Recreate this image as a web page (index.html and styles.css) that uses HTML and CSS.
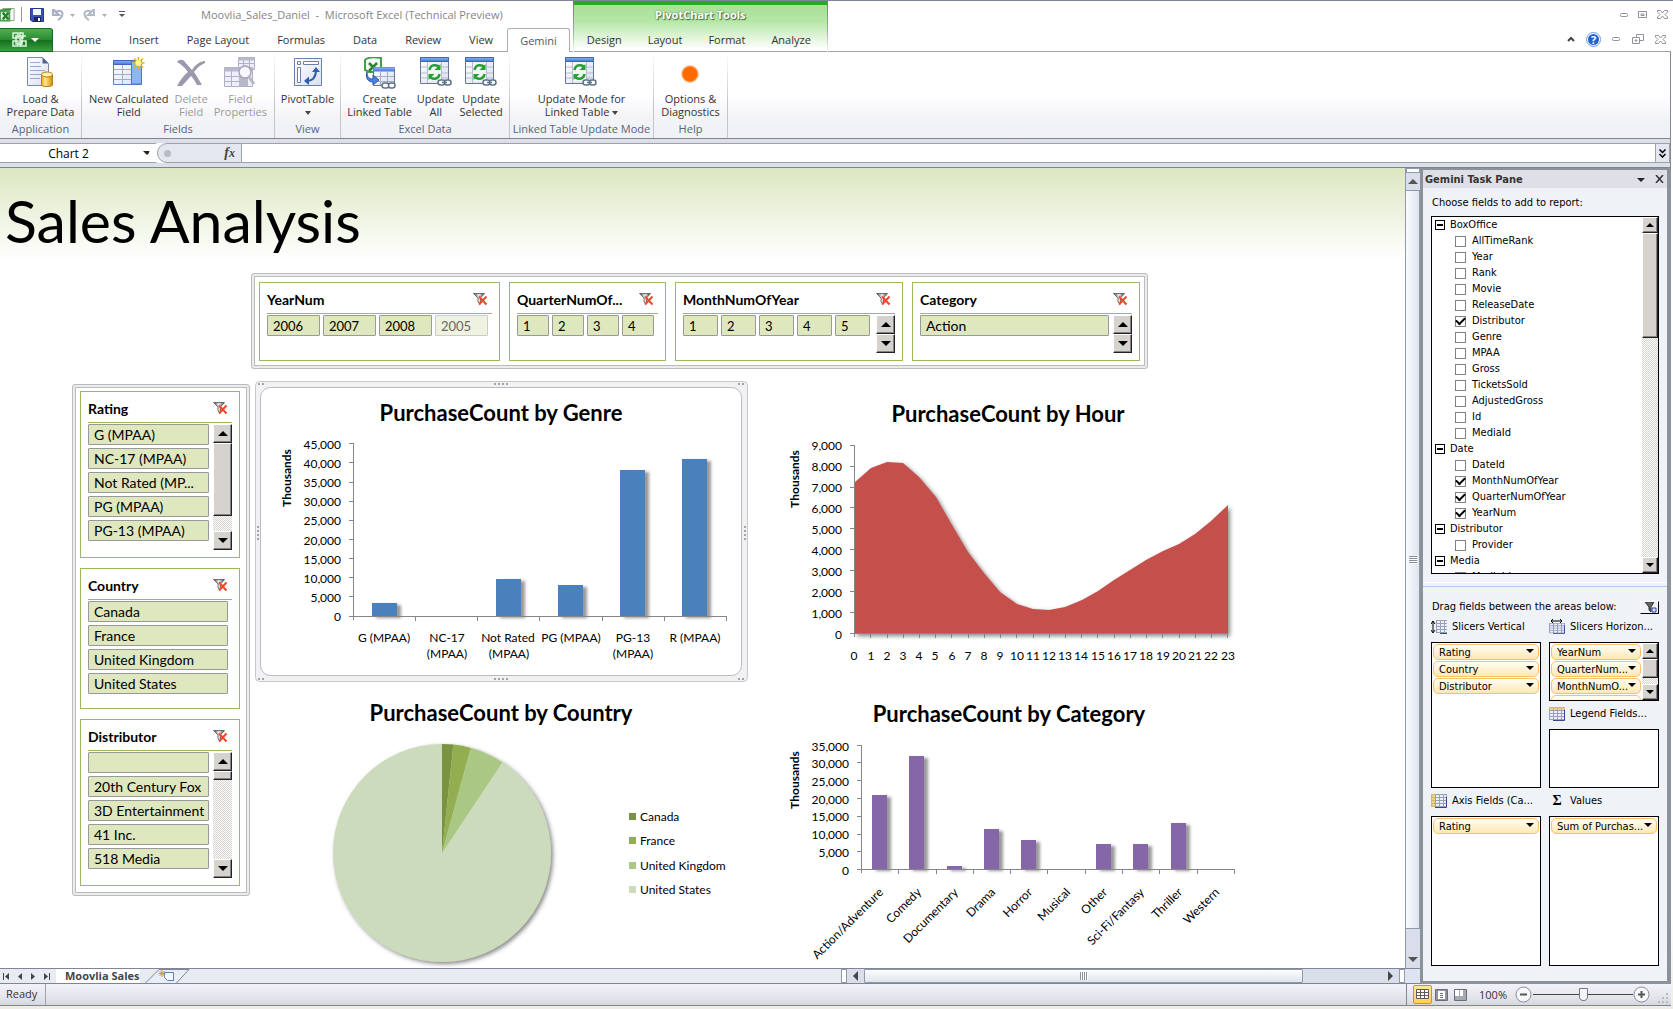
FILE: index.html
```html
<!DOCTYPE html>
<html lang="en">
<head>
<meta charset="utf-8">
<title>Moovlia_Sales_Daniel - Microsoft Excel (Technical Preview)</title>
<link rel="stylesheet" href="styles.css">
</head>
<body>
<svg class="defs" aria-hidden="true">
  <defs>
    <linearGradient id="sheetFill" x1="0" y1="0" x2="1" y2="1"><stop offset="0" stop-color="#fff"/><stop offset="1" stop-color="#d9dff2"/></linearGradient>
    <linearGradient id="blueFill" x1="0" y1="0" x2="0" y2="1"><stop offset="0" stop-color="#8db4f5"/><stop offset="1" stop-color="#3f76d8"/></linearGradient>
    <linearGradient id="goldFill" x1="0" y1="0" x2="1" y2="0"><stop offset="0" stop-color="#e9a81c"/><stop offset=".35" stop-color="#ffe98a"/><stop offset="1" stop-color="#d48a06"/></linearGradient>
    <linearGradient id="funnelFill" x1="0" y1="0" x2="1" y2="0"><stop offset="0" stop-color="#444"/><stop offset=".5" stop-color="#eee"/><stop offset="1" stop-color="#333"/></linearGradient>
    <radialGradient id="orb" cx=".5" cy=".5" r=".5"><stop offset=".75" stop-color="#ff6a00"/><stop offset="1" stop-color="#ff6a00" stop-opacity=".2"/></radialGradient>
    <filter id="shadow" x="-20%" y="-20%" width="150%" height="150%"><feDropShadow dx="4" dy="2" stdDeviation="1.5" flood-color="#555" flood-opacity=".6"/></filter>
    <filter id="softShadow" x="-10%" y="-10%" width="120%" height="120%"><feDropShadow dx="2" dy="2" stdDeviation="2" flood-color="#555" flood-opacity=".7"/></filter>
    <symbol id="clear-filter" viewBox="0 0 15 13">
      <path d="M.5 .5h11L7.500 5v6L5 9V5z" fill="url(#funnelFill)" stroke="#555" stroke-width=".8"/>
      <path d="M6 3.500l7.500 8M13.500 3.500l-7.500 8" stroke="#f4462a" stroke-width="2" fill="none"/>
    </symbol>
    <symbol id="excel" viewBox="0 0 16 16">
      <path d="M3 1h12v13H4z" fill="#fff" stroke="#8a9a8a"/>
      <path d="M0 2l12-1v2l-11 1zM0 2h2v12h-2z" fill="#2f8f37"/>
      <path d="M0 4h10v10H0z" fill="#e7f3e6" stroke="#48a04d" stroke-width="2"/>
      <path d="M3 5.500l6 7M9 5.500l-6 7" stroke="#1f7f2a" stroke-width="2.500"/>
    </symbol>
    <symbol id="linked-refresh" viewBox="0 0 32 30">
      <path d="M.5 .5h28v26h-28z" fill="url(#sheetFill)" stroke="#68768f"/>
      <path d="M.5 .5h28v4h-28z" fill="url(#blueFill)" stroke="#3f68b8"/>
      <path d="M1 10h27M1 16h27M1 21h27M7.500 5v21M21.500 5v21" stroke="#b4bccd" fill="none"/>
      <path d="M8 7h13v17H8z" fill="#f2f6f5"/>
      <path d="M9.500 13c1-6 8-6 10-2" stroke="#26a034" stroke-width="2.500" fill="none"/>
      <path d="M20.500 7v6h-6z" fill="#26a034"/>
      <path d="M19.500 17c-1 6-8 6-10 2" stroke="#26a034" stroke-width="2.500" fill="none"/>
      <path d="M8.500 23v-6h6z" fill="#26a034"/>
      <rect x="18" y="23" width="7" height="5" rx="2.500" fill="#fff" stroke="#5e7389" stroke-width="1.500"/>
      <rect x="24.500" y="23" width="6.500" height="5" rx="2.500" fill="#fff" stroke="#5e7389" stroke-width="1.500"/>
      <path d="M22 25.500h5" stroke="#5e7389" stroke-width="1.500"/>
    </symbol>
    <symbol id="grid" viewBox="0 0 16 14">
      <path d="M0 0h16v13H0z" fill="#98a0b8"/>
      <path d="M1 4h3v2H1zM5 4h3v2H5zM9 4h3v2H9zM13 4h2v2h-2zM1 7h3v2H1zM5 7h3v2H5zM9 7h3v2H9zM13 7h2v2h-2zM1 10h3v2H1zM5 10h3v2H5zM9 10h3v2H9zM13 10h2v2h-2zM1 1h3v2H1zM5 1h3v2H5zM9 1h3v2H9zM13 1h2v2h-2z" fill="#eef"/>
      <path d="M15.500 3v10.500H4" stroke="#3b478c" fill="none"/>
    </symbol>
    <symbol id="close-x" viewBox="0 0 11 9">
      <path d="M.5 .5h3l2 2.500 2-2.500h3v1.500L8 4.500 10.500 7v1.500h-3L5.500 6l-2 2.500h-3V7L3 4.500.5 2z" fill="#fff" stroke="#909399"/>
    </symbol>
  </defs>
</svg>

<div class="app">
  <header class="chrome">
    <div class="chrome-main">
      <div class="titlebar">
        <svg class="ic-app" viewBox="0 0 16 16"><use href="#excel"/></svg>
        <span class="vsep"></span>
        <button class="qa" aria-label="Save"><svg width="14" height="14" viewBox="0 0 14 14"><path d="M.5 .5h13v13H2l-1.500-1.500z" fill="#3a50b4" stroke="#27378c"/><path d="M3 1h8v6H3z" fill="#f4f6ff"/><path d="M4 9h7v5H4z" fill="#1c2555"/><path d="M8 10h2v3H8z" fill="#fff"/></svg></button>
        <button class="qa" aria-label="Undo"><svg width="23" height="12" viewBox="0 0 23 12"><path d="M1 0v6h6zM3 4c4-4 9-2 7 3-1 2-2 3-4 4" fill="none" stroke="#aab0c4" stroke-width="2"/><path d="M18 5h5l-2.500 3z" fill="#a9adb5"/></svg></button>
        <button class="qa" aria-label="Redo"><svg width="24" height="12" viewBox="0 0 24 12"><path d="M11 0v6H5zM9 4C5 0 0 2 2 7c1 2 2 3 4 4" fill="none" stroke="#b4b9c8" stroke-width="2"/><path d="M19 5h5l-2.500 3z" fill="#a9adb5"/></svg></button>
        <button class="qa last" aria-label="Customize Quick Access Toolbar"><svg width="6" height="7" viewBox="0 0 6 7"><path d="M0 .5h6" stroke="#555"/><path d="M0 3h6L3 6z" fill="#555"/></svg></button>
        <h1 class="doc-title">Moovlia_Sales_Daniel &nbsp;- &nbsp;Microsoft Excel (Technical Preview)</h1>
      </div>
      <nav class="tabs">
        <button class="file-tab" aria-label="File"><svg width="28" height="16" viewBox="0 0 28 16"><path d="M1 1h5v5H1zM8.500 1H11v5H8.500M1 9h5v5H1zM4 4h6v8H4zM9 9h5v5H9zM11 4h3M8 0v15" fill="none" stroke="#d9f7d9" stroke-width="1.500"/><path d="M19 6h8l-4 4z" fill="#fff"/></svg></button>
        <button class="tab">Home</button><button class="tab">Insert</button><button class="tab">Page Layout</button><button class="tab">Formulas</button><button class="tab">Data</button><button class="tab">Review</button><button class="tab">View</button><button class="tab active">Gemini</button>
      </nav>
    </div>
    <div class="context">
      <p class="context-title">PivotChart Tools</p>
      <nav class="context-tabs"><button class="tab">Design</button><button class="tab">Layout</button><button class="tab">Format</button><button class="tab">Analyze</button></nav>
    </div>
    <div class="window-controls">
      <div class="wc-row">
        <button aria-label="Minimize"><svg width="9" height="4" viewBox="0 0 9 4"><rect x=".5" y=".5" width="7" height="3" rx="1" fill="#fff" stroke="#909399"/></svg></button>
        <button aria-label="Maximize"><svg width="10" height="8" viewBox="0 0 10 8"><path d="M.5 .5h8v6h-8zM3 3h3v1.500H3z" fill="#fff" stroke="#909399"/></svg></button>
        <button aria-label="Close"><svg width="11" height="9"><use href="#close-x"/></svg></button>
      </div>
      <div class="wc-row low">
        <button aria-label="Minimize the Ribbon"><svg width="8" height="6" viewBox="0 0 8 6"><path d="M1 5l3-3 3 3" fill="none" stroke="#444" stroke-width="2"/></svg></button>
        <button aria-label="Help"><svg width="15" height="15" viewBox="0 0 15 15"><circle cx="7.500" cy="7.500" r="7" fill="#fff" stroke="#6f9be6"/><circle cx="7.500" cy="7.500" r="5.500" fill="#2460d4"/><text x="7.500" y="11.500" text-anchor="middle" class="help-q">?</text></svg></button>
        <button aria-label="Minimize Window"><svg width="9" height="4" viewBox="0 0 9 4"><rect x=".5" y=".5" width="7" height="3" rx="1" fill="#fff" stroke="#909399"/></svg></button>
        <button aria-label="Restore Window"><svg width="12" height="10" viewBox="0 0 12 10"><path d="M4.500 .5h7v6h-7z" fill="#fff" stroke="#909399"/><path d="M.5 3.500h7v6h-7zM3 6h2v1H3z" fill="#fff" stroke="#909399"/></svg></button>
        <button aria-label="Close Window"><svg width="11" height="9"><use href="#close-x"/></svg></button>
      </div>
    </div>
  </header>

  <section class="ribbon">
    <div class="group g-app">
      <div class="cmds">
        <button class="cmd"><svg width="28" height="31" viewBox="0 0 28 31"><path d="M1.500 .5h15l6 6v22h-21z" fill="url(#sheetFill)" stroke="#7e8aa6"/><path d="M16.500 .5v6h6z" fill="#4d6494"/><path d="M4 5.500h10M4 9.500h11M4 13.500h15M4 17.500h11M4 21.500h10" stroke="#9aa8cc"/><path d="M15.500 18v10c0 2 11 2 11 0V18z" fill="url(#goldFill)" stroke="#b97e12"/><ellipse cx="21" cy="17.500" rx="5.500" ry="2.500" fill="#fff0b0" stroke="#b97e12"/></svg><span>Load &amp;<br>Prepare Data</span></button>
      </div>
      <p class="group-label">Application</p>
    </div>
    <div class="group g-fields">
      <div class="cmds">
        <button class="cmd"><svg width="32" height="31" viewBox="0 0 32 31"><path d="M.5 3.500h28v24h-28z" fill="url(#sheetFill)" stroke="#5b7fc0"/><path d="M.5 3.500h28v4h-28z" fill="url(#blueFill)" stroke="#3f68b8"/><path d="M18.500 4h10v23h-10z" fill="#8fb5f6" stroke="#4b79c9"/><path d="M1 12.500h17M1 17.500h17M1 22.500h17M9.500 8v19" stroke="#a5adc0"/><path d="M25.500 0v12M19.500 6h12M21 1.500l9 9M30 1.500l-9 9" stroke="#e8b40c" stroke-width="1.500"/><circle cx="25.500" cy="6" r="3" fill="#fff6a0"/></svg><span>New Calculated<br>Field</span></button>
        <button class="cmd off"><svg width="30" height="31" viewBox="0 0 30 31"><path d="M1 5c2-3 6-3 8 0l7 8C19 8 24 4 29 4v2c-5 2-8 5-11 9 3 4 5 8 8 13h-5c-2-4-4-7-6-9-3 3-6 7-9 10H1c3-6 7-11 11-14C8 10 5 7 1 5z" fill="#9b99ae"/></svg><span>Delete<br>Field</span></button>
        <button class="cmd off"><svg width="32" height="31" viewBox="0 0 32 31"><path d="M14.500 .5h16v12h-16zM.5 10.500h28v19h-28z" fill="#eef" stroke="#b0b0c2"/><path d="M14.500 .5h16v3h-16zM.5 10.500h28v4h-28zM15 15h9v14h-9z" fill="#b9b8ca"/><path d="M1 19.500h14M1 24.500h14M7.500 14v15M19.500 3v7M25.500 3v7M15 6.500h15" stroke="#b0b0c2"/><circle cx="21" cy="15" r="6" fill="#f6f6fc" stroke="#a5a4b8" stroke-width="1.500"/><path d="M25 20l5 7" stroke="#b6b5c6" stroke-width="3"/></svg><span>Field<br>Properties</span></button>
      </div>
      <p class="group-label">Fields</p>
    </div>
    <div class="group g-view">
      <div class="cmds">
        <button class="cmd"><svg width="28" height="31" viewBox="0 0 28 31"><path d="M.5 1.500h27v27H.5z" fill="url(#sheetFill)" stroke="#6b80a8"/><path d="M3.500 4.500h3v3h-3zM9.500 4.500h15v3h-15zM3.500 10.500h3v15h-3z" fill="#fff" stroke="#6b80a8"/><path d="M12 24c6 0 10-3 10-11" fill="none" stroke="#2f5fae" stroke-width="2"/><path d="M18 15l4-5 4 5zM15 19.500l-5 4.500 5 4z" fill="#2f5fae"/></svg><span>PivotTable<br><i class="drop"></i></span></button>
      </div>
      <p class="group-label">View</p>
    </div>
    <div class="group g-data">
      <div class="cmds">
        <button class="cmd"><svg width="32" height="32" viewBox="0 0 32 32"><path d="M1 3c3-3 10-3 16-2v14H5l-4-2z" fill="#f4faf3" stroke="#3f9f46" stroke-width="2"/><path d="M5 6l8 8M13 6l-8 8" stroke="#27842f" stroke-width="2.500"/><path d="M9.500 10.500h21v18h-21z" fill="url(#sheetFill)" stroke="#68768f"/><path d="M9.500 10.500h21v4h-21z" fill="url(#blueFill)"/><path d="M10 19.500h20M10 24.500h20M16.500 15v13M23.500 15v13" stroke="#a5adc0"/><path d="M3 15c0 5 2 7 6 7v-4l6 5-6 5v-3c-5 0-8-4-6-10z" fill="#4c82e0" stroke="#2857ac"/><rect x="18" y="26" width="7" height="5" rx="2.500" fill="#fff" stroke="#5e7389" stroke-width="1.500"/><rect x="24.500" y="26" width="6.500" height="5" rx="2.500" fill="#fff" stroke="#5e7389" stroke-width="1.500"/></svg><span>Create<br>Linked Table</span></button>
        <button class="cmd"><svg width="32" height="30"><use href="#linked-refresh"/></svg><span>Update<br>All</span></button>
        <button class="cmd"><svg width="32" height="30"><use href="#linked-refresh"/></svg><span>Update<br>Selected</span></button>
      </div>
      <p class="group-label">Excel Data</p>
    </div>
    <div class="group g-mode">
      <div class="cmds">
        <button class="cmd"><svg width="32" height="30"><use href="#linked-refresh"/></svg><span>Update Mode for<br>Linked Table <i class="drop"></i></span></button>
      </div>
      <p class="group-label">Linked Table Update Mode</p>
    </div>
    <div class="group g-help">
      <div class="cmds">
        <button class="cmd"><svg width="20" height="31" viewBox="0 0 20 31"><circle cx="10" cy="17" r="9" fill="url(#orb)"/></svg><span>Options &amp;<br>Diagnostics</span></button>
      </div>
      <p class="group-label">Help</p>
    </div>
  </section>

  <section class="formula-bar">
    <label class="name-box"><input class="name-input" type="text" value="Chart 2" aria-label="Name Box"><i class="drop big"></i></label>
    <div class="fx-cap"><span class="fx-dot"></span><button class="fx" aria-label="Insert Function">f<small>x</small></button></div>
    <input class="formula-input" type="text" aria-label="Formula">
    <button class="fx-expand" aria-label="Expand Formula Bar"><svg width="7" height="9" viewBox="0 0 7 9"><path d="M.5 .5l3 3 3-3M.5 5l3 3 3-3" fill="none" stroke="#000" stroke-width="1.500"/></svg></button>
  </section>

  <div class="workspace">
    <div class="book">
      <div class="sheet-row">
        <main class="sheet">
          <h2 class="sheet-title">Sales Analysis</h2>
          <section class="slicers horizontal">
            <div class="slicer s-year">
              <header><h3>YearNum</h3><button aria-label="Clear Filter"><svg width="15" height="13"><use href="#clear-filter"/></svg></button></header>
              <div class="slicer-body"><div class="opts row"><button>2006</button><button>2007</button><button>2008</button><button class="dim">2005</button></div></div>
            </div>
            <div class="slicer s-quarter">
              <header><h3>QuarterNumOf...</h3><button aria-label="Clear Filter"><svg width="15" height="13"><use href="#clear-filter"/></svg></button></header>
              <div class="slicer-body"><div class="opts row"><button>1</button><button>2</button><button>3</button><button>4</button></div></div>
            </div>
            <div class="slicer s-month">
              <header><h3>MonthNumOfYear</h3><button aria-label="Clear Filter"><svg width="15" height="13"><use href="#clear-filter"/></svg></button></header>
              <div class="slicer-body"><div class="opts row"><button>1</button><button>2</button><button>3</button><button>4</button><button>5</button></div><div class="sb"><button class="sb-btn up" aria-label="Up"></button><button class="sb-btn down" aria-label="Down"></button></div></div>
            </div>
            <div class="slicer s-category">
              <header><h3>Category</h3><button aria-label="Clear Filter"><svg width="15" height="13"><use href="#clear-filter"/></svg></button></header>
              <div class="slicer-body"><div class="opts"><button>Action</button></div><div class="sb"><button class="sb-btn up" aria-label="Up"></button><button class="sb-btn down" aria-label="Down"></button></div></div>
            </div>
          </section>

          <div class="dashboard">
            <section class="slicers vertical">
              <div class="slicer tall">
                <header><h3>Rating</h3><button aria-label="Clear Filter"><svg width="15" height="13"><use href="#clear-filter"/></svg></button></header>
                <div class="slicer-body"><div class="opts"><button>G (MPAA)</button><button>NC-17 (MPAA)</button><button>Not Rated (MP...</button><button>PG (MPAA)</button><button>PG-13 (MPAA)</button></div><div class="sb"><button class="sb-btn up" aria-label="Up"></button><span class="sb-thumb t-rating"></span><span class="sb-track"></span><button class="sb-btn down" aria-label="Down"></button></div></div>
              </div>
              <div class="slicer mid">
                <header><h3>Country</h3><button aria-label="Clear Filter"><svg width="15" height="13"><use href="#clear-filter"/></svg></button></header>
                <div class="slicer-body"><div class="opts wide"><button>Canada</button><button>France</button><button>United Kingdom</button><button>United States</button></div></div>
              </div>
              <div class="slicer tall">
                <header><h3>Distributor</h3><button aria-label="Clear Filter"><svg width="15" height="13"><use href="#clear-filter"/></svg></button></header>
                <div class="slicer-body"><div class="opts"><button aria-label="(blank)"></button><button>20th Century Fox</button><button>3D Entertainment</button><button>41 Inc.</button><button>518 Media</button></div><div class="sb"><button class="sb-btn up" aria-label="Up"></button><span class="sb-thumb t-dist"></span><span class="sb-track"></span><button class="sb-btn down" aria-label="Down"></button></div></div>
              </div>
            </section>

            <section class="charts">
              <svg class="chart" width="493" height="301" viewBox="255 381 493 301" role="img" aria-label="PurchaseCount by Genre">
                <rect x="255.500" y="381.500" width="492" height="300" rx="4" fill="#f1f1f3" stroke="#c6c8cb"/>
                <rect x="260.500" y="387.500" width="481" height="288" rx="10" fill="#fff" stroke="#b9bbbf"/>
                <g stroke="#a2a4a8" stroke-width="2" stroke-dasharray="2 2"><path d="M494 384h15M494 679h15M258 526v15M745 526v15M258 384h6M738 384h6M258 679h6M738 679h6"/></g>
                <text class="c-title" x="501" y="421">PurchaseCount by Genre</text>
                <text class="c-unit" transform="translate(291 478) rotate(-90)">Thousands</text>
                <g class="c-axis end"><text x="341" y="449">45,000</text><text x="341" y="468">40,000</text><text x="341" y="487">35,000</text><text x="341" y="506">30,000</text><text x="341" y="525">25,000</text><text x="341" y="545">20,000</text><text x="341" y="564">15,000</text><text x="341" y="583">10,000</text><text x="341" y="602">5,000</text><text x="341" y="621">0</text></g>
                <g fill="#4a81bd" filter="url(#shadow)"><path d="M372 603h25v13h-25zM496 579h25v37h-25zM558 585h25v31h-25zM620 470h25v146h-25zM682 459h25v157h-25z"/></g>
                <path class="c-line" d="M353.500 443v177M349 616.500h378M349 443.500h4M349 462.500h4M349 482.500h4M349 501.500h4M349 520.500h4M349 539.500h4M349 558.500h4M349 577.500h4M349 596.500h4M415.500 617v4M477.500 617v4M539.500 617v4M602.500 617v4M664.500 617v4M726.500 617v4"/>
                <g class="c-axis mid-text"><text x="384" y="642">G (MPAA)</text><text x="447" y="642">NC-17</text><text x="447" y="658">(MPAA)</text><text x="508" y="642">Not Rated</text><text x="509" y="658">(MPAA)</text><text x="571" y="642">PG (MPAA)</text><text x="633" y="642">PG-13</text><text x="633" y="658">(MPAA)</text><text x="695" y="642">R (MPAA)</text></g>
              </svg>

              <svg class="chart" width="500" height="301" viewBox="748 381 500 301" role="img" aria-label="PurchaseCount by Hour">
                <text class="c-title" x="1008" y="422">PurchaseCount by Hour</text>
                <text class="c-unit" transform="translate(799 479) rotate(-90)">Thousands</text>
                <g class="c-axis end"><text x="842" y="450">9,000</text><text x="842" y="471">8,000</text><text x="842" y="492">7,000</text><text x="842" y="513">6,000</text><text x="842" y="534">5,000</text><text x="842" y="555">4,000</text><text x="842" y="576">3,000</text><text x="842" y="597">2,000</text><text x="842" y="618">1,000</text><text x="842" y="639">0</text></g>
                <path fill="#c5504b" filter="url(#softShadow)" d="M855 634V482L871 468 887 462 903 463 919 477 936 497 952 525 968 552 984 573 1000 592 1017 604 1033 609 1049 610 1065 607 1082 600 1098 591 1114 580 1130 570 1146 560 1163 551 1179 544 1195 534 1211 521 1228 505V634z"/>
                <path class="c-line" d="M854.500 445v192M850 633.500h378M850 445.500h4M850 466.500h4M850 487.500h4M850 507.500h4M850 528.500h4M850 549.500h4M850 570.500h4M850 591.500h4M850 612.500h4M870.500 634v4M887.500 634v4M903.500 634v4M919.500 634v4M935.500 634v4M951.500 634v4M968.500 634v4M984.500 634v4M1000.500 634v4M1016.500 634v4M1033.500 634v4M1049.500 634v4M1065.500 634v4M1081.500 634v4M1097.500 634v4M1114.500 634v4M1130.500 634v4M1146.500 634v4M1162.500 634v4M1179.500 634v4M1195.500 634v4M1211.500 634v4M1227.500 634v4"/>
                <g class="c-axis mid-text"><text x="854" y="660">0</text><text x="871" y="660">1</text><text x="887" y="660">2</text><text x="903" y="660">3</text><text x="919" y="660">4</text><text x="935" y="660">5</text><text x="952" y="660">6</text><text x="968" y="660">7</text><text x="984" y="660">8</text><text x="1000" y="660">9</text><text x="1017" y="660">10</text><text x="1033" y="660">11</text><text x="1049" y="660">12</text><text x="1065" y="660">13</text><text x="1081" y="660">14</text><text x="1098" y="660">15</text><text x="1114" y="660">16</text><text x="1130" y="660">17</text><text x="1146" y="660">18</text><text x="1163" y="660">19</text><text x="1179" y="660">20</text><text x="1195" y="660">21</text><text x="1211" y="660">22</text><text x="1228" y="660">23</text></g>
              </svg>

              <svg class="chart" width="493" height="286" viewBox="255 682 493 286" role="img" aria-label="PurchaseCount by Country">
                <text class="c-title" x="501" y="721">PurchaseCount by Country</text>
                <circle cx="442" cy="853" r="109" fill="#cddbbd" filter="url(#softShadow)"/>
                <path d="M442 853V744A109 109 0 0 1 453.400 744.600z" fill="#7a9340"/>
                <path d="M442 853L453.400 744.600A109 109 0 0 1 470.800 747.900z" fill="#92ae50"/>
                <path d="M442 853L470.800 747.900A109 109 0 0 1 502.300 762.200z" fill="#aac784"/>
                <path d="M629 813h7v7h-7z" fill="#7a9340"/><path d="M629 837h7v7h-7z" fill="#92ae50"/><path d="M629 862h7v7h-7z" fill="#aac784"/><path d="M629 886h7v7h-7z" fill="#cddbbd"/>
                <g class="c-axis"><text x="640" y="821">Canada</text><text x="640" y="845">France</text><text x="640" y="870">United Kingdom</text><text x="640" y="894">United States</text></g>
              </svg>

              <svg class="chart" width="500" height="286" viewBox="748 682 500 286" role="img" aria-label="PurchaseCount by Category">
                <text class="c-title" x="1009" y="722">PurchaseCount by Category</text>
                <text class="c-unit" transform="translate(799 780) rotate(-90)">Thousands</text>
                <g class="c-axis end"><text x="849" y="751">35,000</text><text x="849" y="768">30,000</text><text x="849" y="786">25,000</text><text x="849" y="804">20,000</text><text x="849" y="821">15,000</text><text x="849" y="839">10,000</text><text x="849" y="857">5,000</text><text x="849" y="875">0</text></g>
                <g fill="#8566a6" filter="url(#shadow)"><path d="M872 795h15v74h-15zM909 756h15v113h-15zM947 866h15v3h-15zM984 829h15v40h-15zM1021 840h15v29h-15zM1096 844h15v25h-15zM1133 844h15v25h-15zM1171 823h15v46h-15z"/></g>
                <path class="c-line" d="M861.500 745v128M857 869.500h378M857 745.500h4M857 762.500h4M857 780.500h4M857 798.500h4M857 816.500h4M857 834.500h4M857 851.500h4M898.500 870v4M936.500 870v4M973.500 870v4M1010.500 870v4M1047.500 870v4M1085.500 870v4M1122.500 870v4M1159.500 870v4M1197.500 870v4M1234.500 870v4"/>
                <g class="c-axis end"><text transform="translate(884 893) rotate(-45)">Action/Adventure</text><text transform="translate(922 893) rotate(-45)">Comedy</text><text transform="translate(959 893) rotate(-45)">Documentary</text><text transform="translate(996 893) rotate(-45)">Drama</text><text transform="translate(1033 893) rotate(-45)">Horror</text><text transform="translate(1071 893) rotate(-45)">Musical</text><text transform="translate(1108 893) rotate(-45)">Other</text><text transform="translate(1145 893) rotate(-45)">Sci-Fi/Fantasy</text><text transform="translate(1183 893) rotate(-45)">Thriller</text><text transform="translate(1220 893) rotate(-45)">Western</text></g>
              </svg>
            </section>
          </div>
        </main>
        <div class="vscroll"><span class="v-split"></span><button class="v-arrow up" aria-label="Scroll up"></button><span class="v-thumb"><i class="grip"></i></span><span class="v-rest"></span><button class="v-arrow down" aria-label="Scroll down"></button></div>
      </div>
      <div class="sheet-tabs">
        <div class="tab-nav">
          <button aria-label="First sheet"><svg width="8" height="7" viewBox="0 0 8 7"><path d="M.5 0v7" stroke="#444"/><path d="M6 0v7L2 3.500z" fill="#444"/></svg></button>
          <button aria-label="Previous sheet"><svg width="5" height="7" viewBox="0 0 5 7"><path d="M4 0v7L0 3.500z" fill="#444"/></svg></button>
          <button aria-label="Next sheet"><svg width="5" height="7" viewBox="0 0 5 7"><path d="M0 0v7l4-3.500z" fill="#444"/></svg></button>
          <button aria-label="Last sheet"><svg width="8" height="7" viewBox="0 0 8 7"><path d="M1 0v7l4-3.500z" fill="#444"/><path d="M6.500 0v7" stroke="#444"/></svg></button>
        </div>
        <button class="sheet-tab">Moovlia Sales</button>
        <button class="new-sheet" aria-label="Insert Worksheet"><svg width="48" height="15" viewBox="0 0 48 15"><path d="M1 14.500L15 .5h30L32 14.500z" fill="#e9edf5" stroke="#7d8798"/><path d="M20.500 3.500h9v8h-6l-3-3z" fill="#f4f8ff" stroke="#5f7db8"/><path d="M18 1v7M14.500 4.500h7M15.500 2l5 5M20.500 2l-5 5" stroke="#d8902a"/></svg></button>
        <div class="tabs-space"></div>
        <span class="h-split"></span>
        <div class="hscroll"><button class="h-arrow left" aria-label="Scroll left"></button><span class="h-thumb"><i class="grip"></i></span><span class="h-rest"></span><button class="h-arrow right" aria-label="Scroll right"></button></div>
        <span class="h-split"></span>
        <span class="corner"></span>
      </div>
    </div>

    <aside class="pane">
      <header class="pane-head"><h2>Gemini Task Pane</h2><button aria-label="Task Pane Options"><i class="drop big"></i></button><button aria-label="Close"><svg width="9" height="8" viewBox="0 0 9 8"><path d="M1 0l7 8M8 0L1 8" stroke="#333" stroke-width="1.500"/></svg></button></header>
      <div class="pane-body">
        <p class="pane-text">Choose fields to add to report:</p>
        <div class="field-box">
          <div class="fields">
            <p class="node"><i class="expander"></i>BoxOffice</p>
            <label><input type="checkbox">AllTimeRank</label>
            <label><input type="checkbox">Year</label>
            <label><input type="checkbox">Rank</label>
            <label><input type="checkbox">Movie</label>
            <label><input type="checkbox">ReleaseDate</label>
            <label><input type="checkbox" checked>Distributor</label>
            <label><input type="checkbox">Genre</label>
            <label><input type="checkbox">MPAA</label>
            <label><input type="checkbox">Gross</label>
            <label><input type="checkbox">TicketsSold</label>
            <label><input type="checkbox">AdjustedGross</label>
            <label><input type="checkbox">Id</label>
            <label><input type="checkbox">MediaId</label>
            <p class="node"><i class="expander"></i>Date</p>
            <label><input type="checkbox">DateId</label>
            <label><input type="checkbox" checked>MonthNumOfYear</label>
            <label><input type="checkbox" checked>QuarterNumOfYear</label>
            <label><input type="checkbox" checked>YearNum</label>
            <p class="node"><i class="expander"></i>Distributor</p>
            <label><input type="checkbox">Provider</label>
            <p class="node"><i class="expander"></i>Media</p>
            <label><input type="checkbox">MediaId</label>
          </div>
          <div class="sb slim"><button class="sb-btn up" aria-label="Up"></button><span class="sb-thumb t-fields"></span><span class="sb-track"></span><button class="sb-btn down" aria-label="Down"></button></div>
        </div>
      </div>
      <div class="areas-wrap">
        <div class="areas-head"><p class="pane-text">Drag fields between the areas below:</p><button class="defer" aria-label="Filter"><svg width="16" height="11" viewBox="0 0 16 11"><path d="M4 0h9L10 5v5L8 8V5z" fill="#666" stroke="#333"/><path d="M11 6h4v4h-4z" fill="#dfe6ff" stroke="#2b3f9c"/></svg></button></div>
        <div class="areas">
          <section class="area a-v"><h3><svg width="16" height="14" viewBox="0 0 16 14"><path d="M2 1v11M0 4l2-3 2 3M0 10l2 3 2-3" stroke="#000" fill="none"/><svg x="5" y="0" width="10" height="14" viewBox="0 0 16 14" preserveAspectRatio="none"><use href="#grid"/></svg></svg>Slicers Vertical</h3>
            <div class="well"><div class="pills"><button>Rating</button><button>Country</button><button>Distributor</button></div></div></section>
          <section class="area"><h3><svg width="16" height="15" viewBox="0 0 16 15"><path d="M2 2h11M4 0L2 2l2 2M11 0l2 2-2 2" stroke="#000" fill="none"/><svg x="0" y="4" width="14" height="11" viewBox="0 0 16 14" preserveAspectRatio="none"><use href="#grid"/></svg></svg>Slicers Horizon...</h3>
            <div class="well short"><div class="pills"><button>YearNum</button><button>QuarterNum...</button><button>MonthNumO...</button><button aria-label="Category"></button></div><div class="sb slim"><button class="sb-btn up" aria-label="Up"></button><span class="sb-thumb t-area"></span><span class="sb-track"></span><button class="sb-btn down" aria-label="Down"></button></div></div></section>
          <section class="area"><h3><svg width="16" height="14" viewBox="0 0 16 14"><use href="#grid"/><path d="M0 0h16v3H0z" fill="#e8c54e" opacity=".7"/></svg>Legend Fields...</h3><div class="well short"></div></section>
          <section class="area"><h3><svg width="16" height="14" viewBox="0 0 16 14"><use href="#grid"/><path d="M0 0h4v13H0z" fill="#e8c54e" opacity=".7"/></svg>Axis Fields (Ca...</h3><div class="well deep"><div class="pills"><button>Rating</button></div></div></section>
          <section class="area"><h3><b class="sigma">Σ</b>Values</h3><div class="well deep"><div class="pills"><button>Sum of Purchas...</button></div></div></section>
        </div>
      </div>
    </aside>
  </div>

  <footer class="status">
    <span class="ready">Ready</span>
    <div class="views">
      <button class="view on" aria-label="Normal"><svg width="13" height="11" viewBox="0 0 13 11"><path d="M.5 .5h12v9H.5zM.5 3.500h12M.5 6.500h12M4.500 .5v9M8.500 .5v9" fill="#fff" stroke="#5b5b5b"/></svg></button>
      <button class="view" aria-label="Page Layout"><svg width="13" height="12" viewBox="0 0 13 12"><path d="M.5 .5h12v11H.5z" fill="#909399" stroke="#6b6e75"/><path d="M3 2h7v8H3z" fill="#fff"/><path d="M5 4.500h3M5 6.500h3M5 8.500h3" stroke="#6b6e75"/></svg></button>
      <button class="view" aria-label="Page Break Preview"><svg width="13" height="12" viewBox="0 0 13 12"><path d="M.5 .5h12v11H.5z" fill="#a6a9b0" stroke="#6b6e75"/><path d="M1 1h4v6H1zM6 1h3v6H6z" fill="#fff"/></svg></button>
      <button class="zoom-value">100%</button>
      <button class="round" aria-label="Zoom out"><svg width="17" height="17" viewBox="0 0 17 17"><circle cx="8.500" cy="8.500" r="7.500" fill="#f6f7fa" stroke="#888c95"/><path d="M5 8.500h7" stroke="#555" stroke-width="2"/></svg></button>
      <input class="zoom" type="range" min="0" max="100" value="51" aria-label="Zoom">
      <button class="round" aria-label="Zoom in"><svg width="17" height="17" viewBox="0 0 17 17"><circle cx="8.500" cy="8.500" r="7.500" fill="#f6f7fa" stroke="#888c95"/><path d="M5 8.500h7M8.500 5v7" stroke="#555" stroke-width="2"/></svg></button>
      <svg class="resize" width="12" height="12" viewBox="0 0 12 12"><path d="M9 1h2v2H9zM5 5h2v2H5zM9 5h2v2H9zM1 9h2v2H1zM5 9h2v2H5zM9 9h2v2H9z" fill="#b4bac8"/></svg>
    </div>
  </footer>
</div>
</body>
</html>
```
FILE: styles.css
```css
* { box-sizing: border-box; margin: 0; padding: 0; }
body { background: #fff; font-family: "Open Sans", "Noto Sans", sans-serif; font-size: 11px; color: #333; overflow: hidden; }
button { border: 0; background: none; font: inherit; color: inherit; }
input { font: inherit; border: 0; }
svg { display: block; }
h1, h2, h3 { font: inherit; }
.defs { position: absolute; width: 0; height: 0; }

.app { display: flex; flex-direction: column; height: 100vh; padding-right: 2px; padding-bottom: 3px; border-top: 1px solid #80859a; background: linear-gradient(#fff 90%, #efece6 100%); }
.drop { display: inline-block; border: 3px solid transparent; border-top: 4px solid #444; border-bottom: 0; vertical-align: middle; }
.drop.big { border-width: 4px 4px 0; border-top-color: #222; }

/* Title bar and ribbon tabs */
.chrome { display: flex; height: 51px; background: linear-gradient(to top, #9fa4ac 1px, #fff 1px); }
.chrome-main, .context { display: flex; flex-direction: column; }
.titlebar { display: flex; align-items: center; height: 27px; }
.ic-app { width: 15px; height: 16px; }
.vsep { width: 1px; height: 15px; margin: 0 8px 0 6px; background: #999; }
.qa { margin-right: 8px; }
.qa.last { margin-left: 4px; }
.doc-title { margin: 0 0 0 68px; color: #858585; white-space: pre; }
.tabs, .context-tabs { display: flex; height: 24px; }
.file-tab { display: flex; align-items: center; justify-content: center; width: 53px; margin-right: 3px; border: 1px solid #176b1d; border-left: 0; border-radius: 0 3px 0 0; background: linear-gradient(#4fae50, #2b8a30 50%, #16701d 52%, #3c9f40); }
.tab { padding: 0 14px; line-height: 24px; white-space: nowrap; }
.tab.active { border: 1px solid #a9adb4; border-bottom: 0; border-radius: 3px 3px 0 0; padding: 0 12px; margin-right: 3px; background: #fff; color: #4a5766; line-height: 22px; }
.context { width: 255px; background: linear-gradient(to top, #9fa4ac 1px, transparent 1px), linear-gradient(#22ae22 4px, #a9df98 4px, #b5e6a6 20px, #fff 48px); border-style: solid; border-width: 0 1px; border-image: linear-gradient(#22ae22, #7ccb70 60%, #fff) 1; }
.context-title { height: 27px; line-height: 28px; text-align: center; color: #fff; font-weight: bold; text-shadow: 1px 1px 1px #3d6e3d, 0 0 2px #568a56; }
.context-tabs .tab { padding: 0 13px; }
.window-controls { margin-left: auto; padding-right: 3px; }
.wc-row { display: flex; align-items: center; justify-content: flex-end; gap: 9px; height: 27px; }
.wc-row.low { gap: 11px; height: 22px; padding-right: 2px; }
.help-q { font: bold 11px "Open Sans", sans-serif; fill: #fff; }

/* Ribbon */
.ribbon { display: flex; height: 86px; border-right: 1px solid #80859a; background: linear-gradient(#fff 45px, #fcfaff 50px, #f5f5f7 62px, #eef1f6 80px); }
.group { display: flex; flex-direction: column; justify-content: space-between; align-items: center; padding: 5px 0 2px; border-right: 1px solid; border-image: linear-gradient(#fff, #c3c6cc 60%) 1; }
.cmds { display: flex; justify-content: center; gap: 6px; height: 61px; }
.cmd { display: flex; flex-direction: column; align-items: center; line-height: 13px; white-space: nowrap; }
.cmd svg { margin-bottom: auto; }
.cmd span { height: 26px; }
.cmd.off { color: #9b9b9b; }
.group-label { color: #56657a; line-height: 15px; white-space: nowrap; }
.g-app { width: 82px; }
.g-fields { width: 193px; }
.g-view { width: 66px; }
.g-data { width: 169px; }
.g-data .cmds { gap: 5px; }
.g-mode { width: 144px; }
.g-help { width: 74px; }

/* Formula bar */
.formula-bar { display: flex; height: 30px; padding: 4px 0 4px; border-right: 1px solid #80859a; border-top: 1px solid #80868d; border-bottom: 1px solid #80868d; background: #dcdfe9; }
.name-box { display: flex; align-items: center; width: 157px; padding-right: 6px; background: #fff; border: 1px solid #9da2aa; border-width: 1px 0; }
.name-input { flex: 1; min-width: 0; padding-right: 6px; background: none; text-align: center; font-size: 12px; color: #000; }
.fx-cap { display: flex; align-items: center; justify-content: space-between; width: 85px; padding: 0 6px; border: 1px solid #9da2aa; border-radius: 10px 0 0 10px; background: #e5e7f0; box-shadow: -8px 0 #fff; }
.fx-dot { width: 7px; height: 7px; border-radius: 50%; background: #b9bcc4; }
.fx { font: italic bold 14px/14px "Liberation Serif", serif; color: #444; }
.fx small { font-size: 12px; }
.formula-input { flex: 1; min-width: 0; background: #fff; border: 1px solid #9da2aa; border-width: 1px 0; }
.fx-expand { display: flex; align-items: center; justify-content: center; width: 15px; border: 1px solid #9da2aa; background: #e5e7f0; }

/* Workspace */
.workspace { flex: 1; display: flex; min-height: 0; }
.book { flex: 1; display: flex; flex-direction: column; min-width: 0; background: #fff; }
.sheet-row { flex: 1; display: flex; min-height: 0; }
.sheet { flex: 1; min-width: 0; overflow: hidden; color: #000; font-family: Lato, "Open Sans", sans-serif; background: linear-gradient(#dce7c0, #fff 92px); }
.sheet-title { height: 105px; padding: 18px 0 0 5px; font-size: 59px; line-height: 70px; white-space: nowrap; }
.slicers { display: flex; gap: 10px; border: 1px solid #bbb; border-radius: 3px; box-shadow: inset 0 0 0 2px #ececec, inset 0 0 0 3px #bbb; background: #fff; }
.slicers.horizontal { gap: 9px; width: 897px; height: 96px; margin-left: 251px; padding: 8px 7px 7px; }
.slicers.vertical { flex-direction: column; width: 178px; height: 512px; margin-top: 3px; padding: 6px 9px 6px 7px; }
.slicer { border: 1px solid #9bbb59; padding: 0 7px; background: #fff; }
.slicer header { display: flex; align-items: center; justify-content: space-between; height: 31px; padding-right: 4px; padding-top: 2px; border-bottom: 1px solid #9bbb59; }
.slicer h3 { font-size: 14px; font-weight: bold; line-height: 18px; padding-top: 2px; }
.slicer-body { display: flex; justify-content: space-between; padding-top: 1px; }
.opts { display: flex; flex-direction: column; gap: 3px; flex: 1; min-width: 0; margin-right: 4px; }
.opts.row { flex-direction: row; }
.s-month .opts { margin-right: 6px; }
.opts button { flex: 0 0 auto; height: 21px; padding-left: 5px; border: 1px solid #999; border-radius: 1px; background: #dfe7be; text-align: left; font-size: 14px; line-height: 20px; white-space: nowrap; }
.opts.row button { flex: 1; min-width: 0; font-size: 13px; }
.opts .dim { border-color: #ccc; background: #eff2df; color: #666; }
.s-year { width: 241px; }
.s-quarter { width: 157px; }
.s-month, .s-category { width: 228px; }
.tall { height: 167px; }
.mid { height: 141px; }
.tall .sb { height: 126px; }

/* Classic scroll bars */
.sb { display: flex; flex-direction: column; flex: none; width: 19px; }
.sb.slim { width: 16px; }
.sb-btn, .sb-thumb { flex: none; background: #d6d3ce; border: 1px solid #fff; border-right-color: #222; border-bottom-color: #222; box-shadow: inset -1px -1px #848284; }
.sb-btn { display: flex; align-items: center; justify-content: center; height: 19px; }
.slim .sb-btn { height: 16px; }
.sb-btn::before { content: ""; border: 5px solid transparent; }
.sb-btn.up::before { border-top: 0; border-bottom-color: #000; }
.sb-btn.down::before { border-bottom: 0; border-top-color: #000; }
.slim .sb-btn::before { border-left-width: 4px; border-right-width: 4px; }
.slim .sb-btn.up::before { border-bottom-width: 4px; }
.slim .sb-btn.down::before { border-top-width: 4px; }
.sb-track { flex: 1; background: repeating-conic-gradient(#d6d3ce 0 25%, #fff 0 50%) 0 0 / 2px 2px; }
.t-rating { height: 73px; }
.t-dist { height: 9px; }
.t-fields { height: 105px; }
.t-area { height: 19px; }

/* Charts */
.dashboard { display: flex; gap: 5px; margin: 12px 0 0 72px; }
.charts { display: grid; grid-template-columns: 493px 500px; align-content: start; }
.chart { overflow: hidden; }
.c-title { font-size: 22px; font-weight: bold; text-anchor: middle; }
.c-unit { font-size: 12px; font-weight: bold; text-anchor: middle; }
.c-axis { font-size: 12px; }
.end { text-anchor: end; }
.mid-text { text-anchor: middle; }
.c-line { fill: none; stroke: #868686; }

/* Worksheet scroll bars and tabs */
.vscroll { display: flex; flex-direction: column; width: 15px; background: #d9deea; border-left: 1px solid #8f99a8; }
.v-split { height: 5px; border: 1px solid #8f99a8; background: #fff; }
.v-arrow { height: 17px; display: flex; align-items: center; justify-content: center; }
.v-arrow::before, .h-arrow::before { content: ""; border: 5px solid transparent; }
.v-arrow.up::before { border-top: 0; border-bottom-color: #555; }
.v-arrow.down::before { border-bottom: 0; border-top-color: #555; }
.v-thumb { flex: 1; display: flex; align-items: center; justify-content: center; border: 1px solid #8f99a8; border-left: 0; background: linear-gradient(to right, #fafbfd, #dfe4ef); }
.v-rest { height: 22px; }
.v-thumb .grip { width: 8px; height: 8px; background: repeating-linear-gradient(#8a919c 0 1px, #fff 1px 2px); }
.sheet-tabs { display: flex; height: 16px; border-top: 1px solid #80859a; border-bottom: 1px solid #80868d; background: #e9ebf3; }
.tab-nav { display: flex; align-items: center; justify-content: space-between; width: 56px; padding: 0 5px 0 3px; }
.sheet-tab { padding: 0 0 0 9px; background: #fff; color: #404552; font-weight: bold; line-height: 12px; }
.new-sheet { margin-left: 4px; }
.tabs-space { flex: 1; }
.h-split { width: 6px; border: 1px solid #8f99a8; background: #fff; }
.hscroll { flex: 0 0 552px; display: flex; background: #d9deea; }
.h-arrow { display: flex; align-items: center; justify-content: center; width: 17px; }
.h-arrow.left::before { border-left: 0; border-right-color: #444; }
.h-arrow.right::before { border-right: 0; border-left-color: #444; }
.h-thumb { flex: 1; display: flex; align-items: center; justify-content: center; border: 1px solid #8f99a8; border-radius: 1px; background: linear-gradient(#fdfdfe, #dfe4ef); }
.h-thumb .grip { width: 8px; height: 8px; background: repeating-linear-gradient(to right, #8a919c 0 1px, #fff 1px 2px); }
.h-rest { width: 79px; }
.corner { width: 15px; background: #e0e4f2; }

/* Task pane */
.pane { display: flex; flex-direction: column; width: 251px; border: 3px solid #8b9299; border-width: 2px 4px 3px 3px; background: #eff2f7; color: #000; font-family: "DejaVu Sans Condensed", "DejaVu Sans", sans-serif; font-stretch: condensed; font-size: 11px; }
.pane-head { display: flex; align-items: center; gap: 10px; height: 18px; padding: 0 3px 0 2px; background: #dfdfe7; }
.pane-head h2 { margin-right: auto; font-weight: bold; color: #333; }
.pane-body { flex: 1; display: flex; flex-direction: column; min-height: 0; padding: 0 8px 8px; border-bottom: 1px solid #fff; }
.pane-text { padding-left: 1px; line-height: 14px; white-space: nowrap; }
.pane-body .pane-text { margin: 8px 0 6px; }
.field-box { flex: 1; display: flex; min-height: 0; border: 1px solid #000; background: #fff; }
.fields { flex: 1; overflow: hidden; }
.fields label, .node { display: flex; align-items: center; height: 16px; line-height: 16px; }
.fields label { gap: 6px; padding-left: 23px; }
.node { gap: 5px; padding-left: 3px; }
.fields input { appearance: none; display: grid; place-items: center; width: 11px; height: 11px; border: 1px solid #808080; background: #fff; }
.fields input:checked::after { content: ""; width: 7px; height: 4px; margin-top: -2px; border: 2px solid #000; border-top: 0; border-right: 0; transform: rotate(-45deg); }
.expander { display: grid; place-items: center; width: 10px; height: 10px; border: 1px solid #000; }
.expander::after { content: ""; width: 6px; height: 2px; background: #000; }
.areas-wrap { margin-top: 3px; padding: 13px 8px 15px; border-top: 1px solid #a9cdf5; }
.areas-head { display: flex; justify-content: space-between; align-items: center; height: 14px; }
.defer { height: 13px; padding-right: 1px; border: 1px solid #fff; border-right-color: #000; border-bottom-color: #000; }
.areas { display: grid; grid-template-columns: 1fr 1fr; column-gap: 8px; }
.area { min-width: 0; display: flex; flex-direction: column; }
.a-v { grid-row: span 2; }
.area h3 { display: flex; align-items: center; gap: 5px; height: 28px; white-space: nowrap; padding-bottom: 3px; }
.area h3 svg, .sigma { flex: none; width: 16px; }
.sigma { text-align: center; font: bold 14px "Liberation Serif", serif; }
.well { flex: 1; display: flex; border: 1px solid #000; background: #fff; overflow: hidden; }
.well.short { flex: none; height: 59px; }
.well.deep { flex: none; height: 150px; }
.pills { flex: 1; min-width: 0; display: flex; flex-direction: column; gap: 1px; padding: 1px; }
.pills button { flex: none; display: flex; align-items: center; justify-content: space-between; height: 16px; padding: 0 4px 0 5px; border: 1px solid #fdbf6b; border-radius: 5px; background: linear-gradient(#fffdf4, #ffe8b4); white-space: nowrap; }
.pills button::after { content: ""; margin-top: -3px; border: 4px solid transparent; border-top-color: #000; border-bottom: 0; }

/* Status bar */
.status { display: flex; align-items: stretch; justify-content: space-between; height: 22px; border-bottom: 1px solid #80868d; background: linear-gradient(#f2f2fb, #e5e6ec 60%, #d5d8de); }
.ready { width: 46px; padding-left: 6px; line-height: 20px; border-right: 1px solid #9ea3ad; }
.views { display: flex; align-items: center; padding-left: 6px; border-left: 1px solid #80868d; }
.view { display: grid; place-items: center; width: 19px; height: 19px; }
.view.on { border: 1px solid #c89436; border-radius: 2px; background: linear-gradient(#ffe89a, #ffd34f); }
.zoom-value { width: 28px; margin: 0 3px 0 9px; text-align: right; }
.round { margin: 0 0 0 5px; }
.zoom { appearance: none; width: 100px; height: 14px; margin: 0 0 0 1px; background: linear-gradient(#444, #444) 0 6px / 100% 1px no-repeat; }
.zoom::-webkit-slider-thumb { appearance: none; width: 9px; height: 13px; background: #f4f5f8; border: 1px solid #777; border-radius: 1px 1px 5px 5px; }
.zoom + .round { margin-left: 0; }
.resize { margin: 6px 2px 0 7px; }
```
